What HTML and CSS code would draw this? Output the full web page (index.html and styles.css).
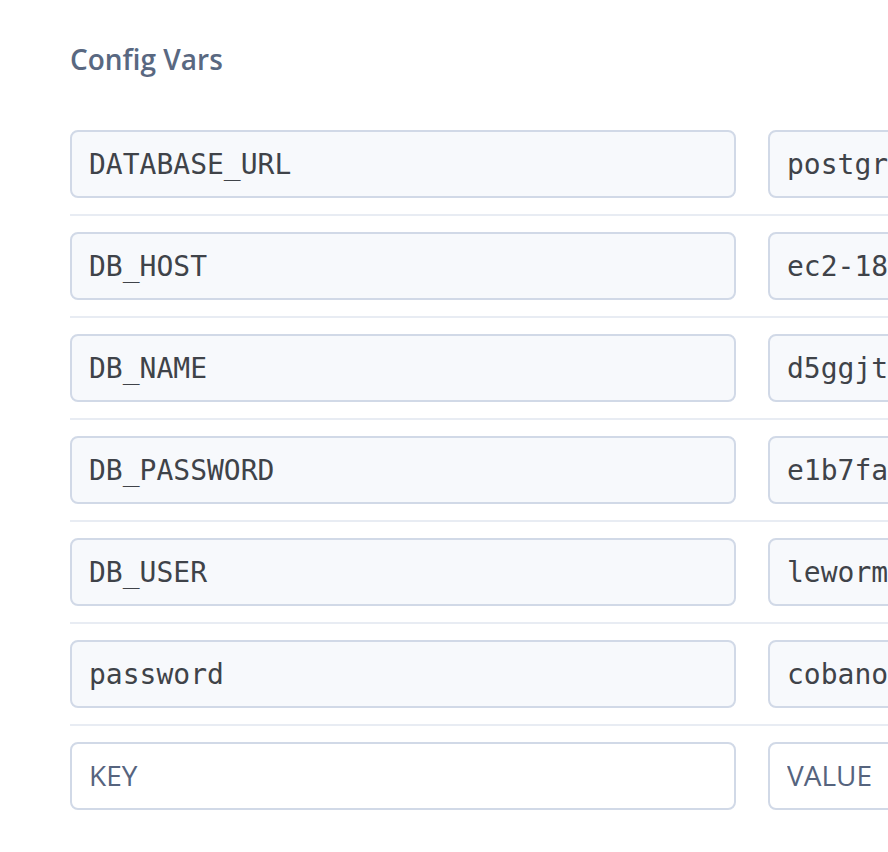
FILE: index.html
```html
<!DOCTYPE html>
<html lang="en">
<head>
<meta charset="utf-8">
<title>Config Vars</title>
<link rel="stylesheet" href="styles.css">
</head>
<body>
<section class="config">
  <h2 class="title">Config Vars</h2>
  <div class="list">
    <div class="row">
      <input class="field key" type="text" value="DATABASE_URL" readonly>
      <input class="field val" type="text" value="postgres://lewormzddonbsx" readonly>
    </div>
    <div class="row">
      <input class="field key" type="text" value="DB_HOST" readonly>
      <input class="field val" type="text" value="ec2-18-204-142-254.compute-1.amazonaws.com" readonly>
    </div>
    <div class="row">
      <input class="field key" type="text" value="DB_NAME" readonly>
      <input class="field val" type="text" value="d5ggjtkq0ui4ka" readonly>
    </div>
    <div class="row">
      <input class="field key" type="text" value="DB_PASSWORD" readonly>
      <input class="field val" type="text" value="e1b7fa8c0f7d2e" readonly>
    </div>
    <div class="row">
      <input class="field key" type="text" value="DB_USER" readonly>
      <input class="field val" type="text" value="lewormzddonbsx" readonly>
    </div>
    <div class="row">
      <input class="field key" type="text" value="password" readonly>
      <input class="field val" type="text" value="cobano" readonly>
    </div>
    <div class="row last">
      <input class="field key empty" type="text" placeholder="KEY">
      <input class="field val empty" type="text" placeholder="VALUE">
    </div>
  </div>
</section>
</body>
</html>
```
FILE: styles.css
```css
html, body {
  margin: 0;
  padding: 0;
  background: #ffffff;
  overflow: hidden;
}

.config {
  padding: 40px 0 0 70px;
  width: 1400px;
}

.title {
  margin: 0 0 36px 0;
  font-family: "Open Sans", "Noto Sans", sans-serif;
  font-weight: 600;
  font-size: 28px;
  color: #596881;
  line-height: normal;
}

.list {
  display: flex;
  flex-direction: column;
}

.row {
  display: flex;
  gap: 32px;
  padding: 16px 0;
  border-bottom: 2px solid #e8ecf3;
}

.row.last {
  border-bottom: none;
}

.field {
  box-sizing: border-box;
  width: 666px;
  height: 68px;
  flex: none;
  margin: 0;
  padding: 0 17px;
  border: 2px solid #d1d9e7;
  border-radius: 8px;
  background: #f7f9fc;
  font-family: "DejaVu Sans Mono", monospace;
  font-size: 28px;
  color: #3f4349;
  outline: none;
}

.field.empty {
  background: #ffffff;
}

.field::placeholder {
  font-family: "Open Sans", "Noto Sans", sans-serif;
  color: #56647e;
  opacity: 1;
}
```
